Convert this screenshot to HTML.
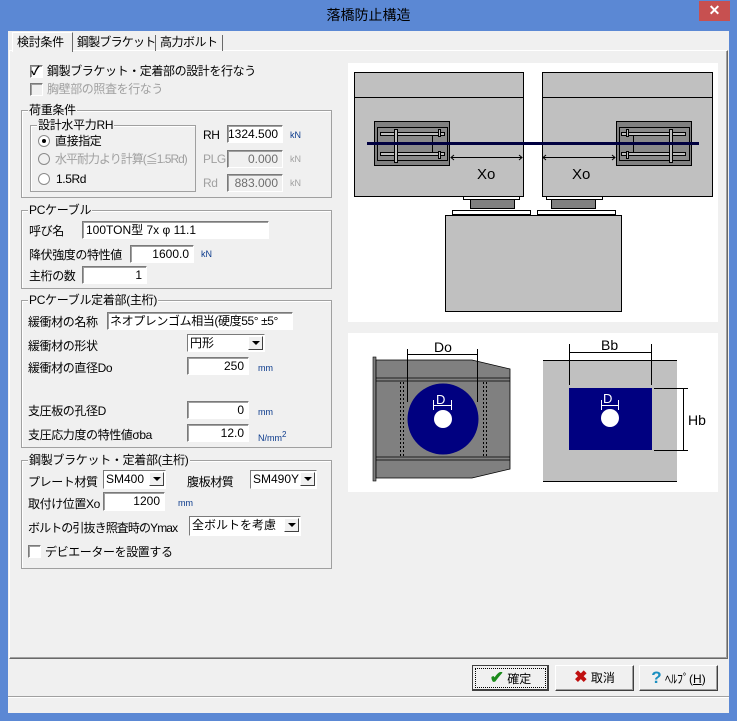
<!DOCTYPE html>
<html><head><meta charset="utf-8">
<style>
*{box-sizing:border-box}
body{margin:0;width:737px;height:721px;background:#5b88d4;font-family:"Liberation Sans","Noto Sans CJK JP",sans-serif;font-size:12px;color:#000;position:relative;overflow:hidden}
.a{position:absolute;white-space:nowrap}
.client{position:absolute;left:8px;top:31px;width:721px;height:682px;background:#f0f0f0}
.title{position:absolute;left:0;top:0;width:737px;height:31px;text-align:center;line-height:30px;font-size:14px;color:#000}
.close{position:absolute;left:699px;top:1px;width:31px;height:20px;background:#c75050;color:#fff;text-align:center;line-height:19px;font-size:14px;font-weight:bold}
.grp{position:absolute;border:1px solid #a0a0a0;box-shadow:inset 1px 1px 0 #fff}
.gl{position:absolute;top:-8px;left:6px;background:#f0f0f0;padding:0 1px;line-height:14px;white-space:nowrap;letter-spacing:-0.3px}
.inp{position:absolute;background:#fff;border:1px solid #7a7a7a;border-right-color:#fff;border-bottom-color:#fff;box-shadow:inset 1px 1px 0 #a0a0a0;text-align:right;padding-right:4px;line-height:16px;white-space:nowrap;overflow:hidden}
.inpd{background:#f0f0f0;color:#6d6d6d}
.l{position:absolute;white-space:nowrap;line-height:14px;letter-spacing:-0.4px}
.u{position:absolute;font-size:9px;color:#0b3a8c;line-height:12px}
.dis{color:#a0a0a0}
.sel{position:absolute;background:#fff;border:1px solid #7a7a7a;border-right-color:#fff;border-bottom-color:#fff;line-height:16px;padding-left:2px;white-space:nowrap;overflow:hidden}
.sel b{position:absolute;right:1px;top:1px;width:15px;height:14px;background:#f0f0f0;border:1px solid #fff;border-right-color:#404040;border-bottom-color:#404040;font-weight:normal}
.sel b:after{content:"";position:absolute;left:3px;top:4px;border-left:4px solid transparent;border-right:4px solid transparent;border-top:4px solid #000}
.cb{position:absolute;width:13px;height:13px;background:#fff;border:1px solid #7a7a7a;border-right-color:#fff;border-bottom-color:#fff;box-shadow:inset 1px 1px 0 #a0a0a0}
.rb{position:absolute;width:12px;height:12px;border-radius:50%;background:#fff;border:1px solid #8a8a8a}
.btn{position:absolute;height:26px;background:#f0f0f0;border:1px solid #fff;border-right-color:#404040;border-bottom-color:#404040;box-shadow:inset -1px -1px 0 #a0a0a0;text-align:center;line-height:23px;font-size:12px;white-space:nowrap}
</style></head><body>
<div class="title">落橋防止構造</div>
<div class="close">✕</div>
<div class="client"></div>
<div class="a" style="left:9px;top:50px;width:719px;height:609px;border:1px solid #fff;border-right-color:#696969;border-bottom-color:#696969;box-shadow:inset -1px -1px 0 #a0a0a0"></div>
<div class="a" style="left:12px;top:32px;width:61px;height:20px;background:#f0f0f0;border:1px solid #fff;border-bottom:none;border-right:1px solid #696969;padding-left:4px;line-height:18px;letter-spacing:-0.3px">検討条件</div>
<div class="a" style="left:74px;top:35px;width:82px;height:16px;border-right:1px solid #696969;padding-left:3px;line-height:15px;letter-spacing:-0.8px">鋼製ブラケット</div>
<div class="a" style="left:157px;top:35px;width:66px;height:16px;border-right:1px solid #696969;padding-left:3px;line-height:15px;letter-spacing:-0.5px">高力ボルト</div>

<div class="cb" style="left:30px;top:65px"></div><div class="l" style="left:31px;top:64px;font-size:12px;font-weight:bold">✓</div>
<div class="l" style="left:47px;top:64px">鋼製ブラケット・定着部の設計を行なう</div>
<div class="cb" style="left:30px;top:83px;background:#f0f0f0"></div>
<div class="l dis" style="left:47px;top:82px">胸壁部の照査を行なう</div>

<div class="grp" style="left:21px;top:110px;width:311px;height:88px"><span class="gl">荷重条件</span></div>
<div class="grp" style="left:30px;top:125px;width:166px;height:67px"><span class="gl">設計水平力RH</span></div>
<div class="rb" style="left:38px;top:135px"></div><div class="a" style="left:42px;top:139px;width:4px;height:4px;background:#000;border-radius:50%"></div>
<div class="l" style="left:55px;top:134px">直接指定</div>
<div class="rb" style="left:38px;top:153px;background:#f0f0f0"></div>
<div class="l dis" style="left:55px;top:152px;letter-spacing:-1px">水平耐力より計算(≦1.5Rd)</div>
<div class="rb" style="left:38px;top:173px"></div>
<div class="l" style="left:56px;top:172px">1.5Rd</div>
<div class="l" style="left:203px;top:128px">RH</div>
<div class="inp" style="left:227px;top:125px;width:56px;height:18px">1324.500</div><div class="u" style="left:290px;top:129px">kN</div>
<div class="l dis" style="left:203px;top:152px">PLG</div>
<div class="inp inpd" style="left:227px;top:150px;width:56px;height:18px">0.000</div><div class="u dis" style="left:290px;top:153px">kN</div>
<div class="l dis" style="left:203px;top:176px">Rd</div>
<div class="inp inpd" style="left:227px;top:174px;width:56px;height:18px">883.000</div><div class="u dis" style="left:290px;top:177px">kN</div>

<div class="grp" style="left:21px;top:210px;width:311px;height:79px"><span class="gl">PCケーブル</span></div>
<div class="l" style="left:29px;top:224px">呼び名</div>
<div class="inp" style="left:82px;top:221px;width:187px;height:18px;text-align:left;padding-left:3px">100TON型 7x φ 11.1</div>
<div class="l" style="left:29px;top:248px">降伏強度の特性値</div>
<div class="inp" style="left:130px;top:245px;width:64px;height:18px">1600.0</div><div class="u" style="left:201px;top:248px">kN</div>
<div class="l" style="left:29px;top:269px">主桁の数</div>
<div class="inp" style="left:82px;top:266px;width:65px;height:18px">1</div>

<div class="grp" style="left:21px;top:300px;width:311px;height:148px"><span class="gl">PCケーブル定着部(主桁)</span></div>
<div class="l" style="left:28px;top:315px">緩衝材の名称</div>
<div class="inp" style="left:107px;top:312px;width:186px;height:18px;text-align:left;padding-left:2px;letter-spacing:-0.4px">ネオプレンゴム相当(硬度55°&nbsp;±5°</div>
<div class="l" style="left:28px;top:339px">緩衝材の形状</div>
<div class="sel" style="left:187px;top:334px;width:78px;height:18px">円形<b></b></div>
<div class="l" style="left:28px;top:361px">緩衝材の直径Do</div>
<div class="inp" style="left:187px;top:357px;width:62px;height:18px">250</div><div class="u" style="left:258px;top:362px">mm</div>
<div class="l" style="left:28px;top:404px">支圧板の孔径D</div>
<div class="inp" style="left:187px;top:401px;width:62px;height:18px">0</div><div class="u" style="left:258px;top:406px">mm</div>
<div class="l" style="left:28px;top:428px">支圧応力度の特性値σba</div>
<div class="inp" style="left:187px;top:424px;width:62px;height:18px">12.0</div><div class="u" style="left:258px;top:429px">N/mm<sup style="font-size:8px">2</sup></div>

<div class="grp" style="left:21px;top:460px;width:311px;height:109px"><span class="gl">鋼製ブラケット・定着部(主桁)</span></div>
<div class="l" style="left:28px;top:475px">プレート材質</div>
<div class="sel" style="left:103px;top:470px;width:63px;height:19px">SM400<b></b></div>
<div class="l" style="left:187px;top:475px">腹板材質</div>
<div class="sel" style="left:250px;top:470px;width:67px;height:19px">SM490Y<b></b></div>
<div class="l" style="left:28px;top:497px">取付け位置Xo</div>
<div class="inp" style="left:103px;top:492px;width:62px;height:19px">1200</div><div class="u" style="left:178px;top:497px">mm</div>
<div class="l" style="left:28px;top:521px;letter-spacing:-0.9px">ボルトの引抜き照査時のYmax</div>
<div class="sel" style="left:189px;top:516px;width:112px;height:20px">全ボルトを考慮<b></b></div>
<div class="cb" style="left:28px;top:545px"></div>
<div class="l" style="left:45px;top:545px">デビエーターを設置する</div>

<svg class="a" style="left:0;top:0" width="737" height="721" font-family="Liberation Sans, sans-serif">
<rect x="348" y="63" width="370" height="259" fill="#fff"/>
<rect x="348" y="333" width="370" height="159" fill="#fff"/>
<g stroke="#000" stroke-width="1">
<rect x="354.5" y="72.5" width="169" height="124" fill="#c0c0c0"/>
<line x1="354" y1="97.5" x2="523" y2="97.5"/>
<rect x="542.5" y="72.5" width="170" height="124" fill="#c0c0c0"/>
<line x1="542" y1="97.5" x2="712" y2="97.5"/>
<rect x="463.5" y="196.5" width="56" height="3" fill="#fff"/>
<rect x="470.5" y="199.5" width="44" height="9" fill="#808080"/>
<rect x="452.5" y="210.5" width="78" height="4" fill="#fff"/>
<rect x="546.5" y="196.5" width="56" height="3" fill="#fff"/>
<rect x="551.5" y="199.5" width="44" height="9" fill="#808080"/>
<rect x="537.5" y="210.5" width="78" height="4" fill="#fff"/>
<rect x="445.5" y="215.5" width="176" height="96" fill="#c0c0c0"/>
<rect x="374.5" y="121.5" width="75" height="44" fill="#808080"/>
<rect x="377.5" y="127.5" width="70" height="33" fill="#8a8a8a"/>
<rect x="616.5" y="121.5" width="75" height="44" fill="#808080"/>
<rect x="619.5" y="127.5" width="70" height="33" fill="#8a8a8a"/>
</g>
<g stroke="#000" fill="#c0c0c0" stroke-width="1">
<rect x="380.5" y="132.5" width="64" height="3"/><rect x="380.5" y="152.5" width="64" height="3"/>
<rect x="394.5" y="129.5" width="3" height="33"/>
<rect x="438.5" y="129.5" width="2" height="7"/><rect x="438.5" y="151.5" width="2" height="7"/>
<line x1="432.5" y1="136" x2="432.5" y2="152"/>
<rect x="621.5" y="132.5" width="64" height="3"/><rect x="621.5" y="152.5" width="64" height="3"/>
<rect x="669.5" y="129.5" width="3" height="33"/>
<rect x="626.5" y="129.5" width="2" height="7"/><rect x="626.5" y="151.5" width="2" height="7"/>
<line x1="633.5" y1="136" x2="633.5" y2="152"/>
</g>
<rect x="367" y="142" width="332" height="3" fill="#000040"/>
<g stroke="#000" stroke-width="1" fill="none">
<line x1="451" y1="157.5" x2="522" y2="157.5"/><path d="M454 155l-3 2.5 3 2.5M519 155l3 2.5-3 2.5"/>
<line x1="543" y1="157.5" x2="615" y2="157.5"/><path d="M546 155l-3 2.5 3 2.5M612 155l3 2.5-3 2.5"/>
</g>
<text x="477" y="179" font-size="15">Xo</text>
<text x="572" y="179" font-size="15">Xo</text>
<rect x="373" y="357" width="3" height="124" fill="#808080" stroke="#000" stroke-width="0.6"/>
<polygon points="376,360 472,360 510,369 510,469 472,478 376,478" fill="#808080" stroke="#000" stroke-width="0.8"/>
<g stroke="#000" stroke-width="0.8"><line x1="376" y1="378" x2="510" y2="378"/><line x1="376" y1="381" x2="510" y2="381"/>
<line x1="376" y1="457" x2="510" y2="457"/><line x1="376" y1="460" x2="510" y2="460"/></g>
<g stroke="#000" stroke-dasharray="2,2"><line x1="400.5" y1="382" x2="400.5" y2="456"/><line x1="403.5" y1="382" x2="403.5" y2="456"/><line x1="483.5" y1="382" x2="483.5" y2="456"/><line x1="486.5" y1="382" x2="486.5" y2="456"/></g>
<circle cx="443" cy="419" r="35.5" fill="#000080"/>
<circle cx="443" cy="419" r="9" fill="#fff"/>
<g stroke="#000"><line x1="407.5" y1="349" x2="407.5" y2="402"/><line x1="477.5" y1="349" x2="477.5" y2="402"/><line x1="407" y1="354.5" x2="478" y2="354.5"/></g>
<text x="434" y="352" font-size="14">Do</text>
<g stroke="#fff"><line x1="434" y1="405.5" x2="451" y2="405.5"/><line x1="433.5" y1="400" x2="433.5" y2="410"/><line x1="451.5" y1="400" x2="451.5" y2="410"/></g>
<text x="436" y="404" font-size="13" fill="#fff">D</text>
<rect x="543" y="360" width="134" height="121" fill="#c0c0c0"/>
<g stroke="#000"><line x1="543" y1="360.5" x2="677" y2="360.5"/><line x1="543" y1="481.5" x2="677" y2="481.5"/></g>
<rect x="569" y="388" width="83" height="62" fill="#000080"/>
<circle cx="610" cy="418" r="9" fill="#fff"/>
<g stroke="#fff"><line x1="601" y1="405.5" x2="619" y2="405.5"/><line x1="601.5" y1="400" x2="601.5" y2="410"/><line x1="618.5" y1="400" x2="618.5" y2="410"/></g>
<text x="603" y="403" font-size="13" fill="#fff">D</text>
<g stroke="#000"><line x1="569.5" y1="344" x2="569.5" y2="385"/><line x1="651.5" y1="344" x2="651.5" y2="385"/><line x1="569" y1="352.5" x2="652" y2="352.5"/>
<line x1="654" y1="388.5" x2="688" y2="388.5"/><line x1="654" y1="450.5" x2="688" y2="450.5"/><line x1="683.5" y1="388" x2="683.5" y2="451"/></g>
<text x="601" y="350" font-size="14">Bb</text>
<text x="688" y="425" font-size="14">Hb</text>
</svg>

<div class="btn" style="left:472px;top:665px;width:77px;outline:1px dotted #000;outline-offset:-4px;border:1px solid #404040;box-shadow:inset -1px -1px 0 #404040"><span style="color:#1a8a1a;font-size:17px;font-weight:bold">✔</span> 確定</div>
<div class="btn" style="left:555px;top:665px;width:79px"><span style="color:#c01010;font-size:16px;font-weight:bold">✖</span> 取消</div>
<div class="btn" style="left:639px;top:665px;width:79px"><span style="color:#1a8fc0;font-size:17px;font-weight:bold">?</span> ﾍﾙﾌﾟ(<u>H</u>)</div>
<div class="a" style="left:8px;top:696px;width:721px;height:17px;border-top:1px solid #a0a0a0;box-shadow:inset 0 1px 0 #fff"></div>
</body></html>
